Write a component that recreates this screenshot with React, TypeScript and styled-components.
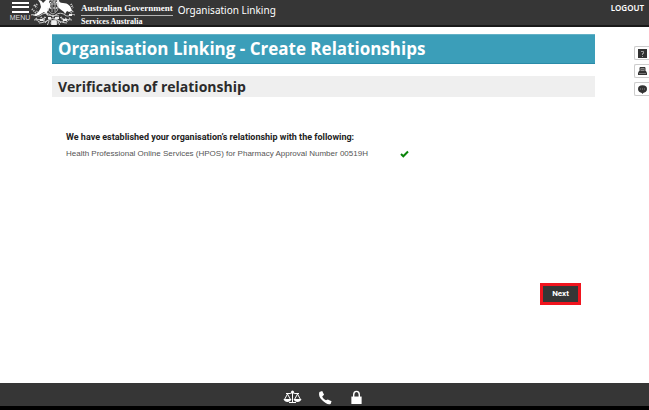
import React from 'react';
import styled, { createGlobalStyle } from 'styled-components';

const GlobalStyle = createGlobalStyle`
  * { box-sizing: border-box; }
  body { margin: 0; background: #fff; font-family: "Liberation Sans", Arial, sans-serif; }
  h1, h2, p { margin: 0; }
  button { border: 0; padding: 0; font-family: inherit; cursor: pointer; }
  a { color: inherit; text-decoration: none; }
  svg { display: block; flex: none; }
`;

const Page = styled.div`
  min-height: 100vh;
  display: flex;
  flex-direction: column;
`;

const TopBar = styled.header`
  height: 27px;
  display: flex;
  align-items: flex-start;
  background: #363636;
  border-bottom: 2px solid #191919;
  color: #fff;
  overflow: hidden;
`;

const MenuButton = styled.button`
  width: 20px;
  margin-left: 10px;
  padding-top: 1px;
  display: flex;
  flex-direction: column;
  align-items: center;
  gap: 1px;
  background: none;
  color: #ddd;
  font-size: 7px;
  line-height: 8px;
`;

const Brand = styled.a`
  display: flex;
  align-items: flex-start;
`;

const BrandText = styled.span`
  margin-left: 5px;
  display: flex;
  flex-direction: column;
  font-family: "Liberation Serif", "Times New Roman", serif;
  font-weight: 700;
  white-space: nowrap;
`;

const Government = styled.span`
  padding-top: 2px;
  border-bottom: 1px solid #b5b5b5;
  font-size: 9px;
  line-height: 13px;
`;

const Agency = styled.span`
  font-size: 8px;
  line-height: 11px;
`;

const AppName = styled.span`
  margin-left: 5px;
  padding-top: 2px;
  flex: 1;
  font-family: "Noto Sans", "Open Sans", sans-serif;
  font-size: 10px;
  line-height: 16px;
  white-space: nowrap;
`;

const Logout = styled.button`
  margin-right: 5px;
  padding-top: 3px;
  background: none;
  color: #fff;
  font-family: "Noto Sans", "Open Sans", sans-serif;
  font-size: 8px;
  font-weight: 600;
  line-height: 10px;
`;

const Body = styled.div`
  flex: 1;
  display: grid;
  grid-template-columns: 52px minmax(0, 1fr) 54px;
`;

const Main = styled.main`
  grid-column: 2;
  padding-top: 7px;
`;

const Title = styled.h1`
  padding: 0 6px;
  background: #3b9eb9;
  border-top: 1px solid #63b1c6;
  border-bottom: 1px solid #2a8ba8;
  color: #fff;
  font-family: "Open Sans", sans-serif;
  font-size: 17px;
  font-weight: 700;
  line-height: 28px;
`;

const Subtitle = styled.h2`
  margin-top: 12px;
  padding: 0 6px;
  background: #efefef;
  color: #2b2b2b;
  font-family: "Open Sans", sans-serif;
  font-size: 14px;
  font-weight: 700;
  line-height: 21px;
`;

const Result = styled.section`
  margin-top: 34px;
  padding-left: 14px;
  line-height: 12px;
`;

const Lead = styled.p`
  color: #222;
  font-family: Roboto, Arial, sans-serif;
  font-size: 9px;
  font-weight: 700;
`;

const Service = styled.p`
  margin-top: 5px;
  display: flex;
  align-items: center;
  gap: 32px;
  color: #555;
  font-size: 8px;
`;

const Actions = styled.div`
  margin-top: 123px;
  padding-right: 14px;
  display: flex;
  justify-content: flex-end;
`;

const NextButton = styled.button`
  width: 41px;
  height: 22px;
  border: 3px solid #f0141e;
  background: #363636;
  color: #fff;
  font-family: Roboto, Arial, sans-serif;
  font-size: 8px;
  font-weight: 700;
  line-height: 10px;
`;

const Tools = styled.aside`
  padding-top: 19px;
  display: flex;
  flex-direction: column;
  align-items: flex-end;
  gap: 4px;
`;

const Tool = styled.button`
  width: 15px;
  height: 14px;
  display: flex;
  align-items: center;
  justify-content: center;
  background: #fff;
  border: 1px solid #ccc;
  border-right: 0;
  border-radius: 2px 0 0 2px;
`;

const Footer = styled.footer`
  height: 27px;
  padding: 7px 0 0 282px;
  display: flex;
  gap: 11px;
  align-items: flex-start;
  background: #363636;
  border-bottom: 4px solid #000;
  color: #fff;
`;

const FooterLink = styled.a`
  width: 21px;
  display: flex;
  justify-content: center;
`;

function Crest() {
  return (
    <svg width="46" height="27" viewBox="0 0 46 27" fill="none" stroke="#ccc" strokeWidth="1" aria-hidden="true">
      <path d="M8 0c3 0 4 1 5 3l3-3h4l-1 2c2 2 2 5 0 7l-2 3 1 3h-1l-3-3-5 3-7 1c5-2 7-4 9-9l-1-4z" fill="#fff" stroke="none" />
      <path d="M29 0c0 2 1 3 4 3 5 0 8 3 9 8l-3 1-2-1-2 3-1-2-4-3c-3-2-4-5-3-9z" fill="#fff" stroke="none" />
      <path d="M19 0h9v8c0 3-3 5-5 6-3-1-5-3-5-6M20 4h8M22 0v12M25 0v12" strokeWidth="0.8" />
      <path d="M20 2l1 1M24 1v2M27 2l-1 1M20 7l1 2M24 7v2M27 7l-1 2" stroke="#eee" />
      <path d="M1 15c4-2 6 3 10 0s8-2 12 2c4-4 8-5 12-2s6-2 10 0M4 20c5-1 8 1 12-3M42 20c-5-1-8 1-12-3M9 23c4 0 8-2 14-5 6 3 10 5 14 5" />
      <path d="M4 5l3 3M2 9l3 3M5 13l3-2M7 4l-2 3M41 4l2 4M43 11l-3 3M6 18l3 4M11 17l3 4M15 17l-2 4M36 18l-3 4M31 17l3 4M40 18l-4 4" strokeDasharray="1 1" strokeWidth="2" />
      <path d="M17 15l12 1M15 23c3-4 5-4 8-2 3-2 5-2 8 2M19 21l-2 5M28 21l2 5" />
      <circle cx="24" cy="23" r="3" fill="#eee" />
      <path d="M10 20h3M33 20h4M18 18h3M25 18h4M5 15h2M39 15h3" stroke="#eee" strokeWidth="2" />
    </svg>
  );
}

function MenuIcon() {
  return (
    <svg width="17" height="12" viewBox="0 0 17 12" fill="#fff" aria-hidden="true">
      <path d="M0 1h17v2H0zM0 5h17v2H0zM0 10h17v2H0z" />
    </svg>
  );
}

export default function App() {
  return (
    <>
      <GlobalStyle />
      <Page>
        <TopBar>
          <MenuButton type="button"><MenuIcon />MENU</MenuButton>
          <Brand href="#home">
            <Crest />
            <BrandText>
              <Government>Australian Government</Government>
              <Agency>Services Australia</Agency>
            </BrandText>
          </Brand>
          <AppName>Organisation Linking</AppName>
          <Logout type="button">LOGOUT</Logout>
        </TopBar>
        <Body>
          <Main>
            <Title>Organisation Linking - Create Relationships</Title>
            <Subtitle>Verification of relationship</Subtitle>
            <Result>
              <Lead>We have established your organisation’s relationship with the following:</Lead>
              <Service>
                Health Professional Online Services (HPOS) for Pharmacy Approval Number 00519H
                <svg width="9" height="8" viewBox="0 0 9 8" role="img" aria-label="Established">
                  <path d="M1 4l2.3 2.3L8 1.5" fill="none" stroke="#0a840a" strokeWidth="2" />
                </svg>
              </Service>
            </Result>
            <Actions><NextButton type="button">Next</NextButton></Actions>
          </Main>
          <Tools>
            <Tool type="button" aria-label="Help">
              <svg width="9" height="9" viewBox="0 0 9 9">
                <path d="M0 0h9v9H0z" fill="#333" />
                <path d="M3 2.5h2.5v2h-1V6M4.5 7v1" fill="none" stroke="#bbb" strokeWidth="0.8" />
              </svg>
            </Tool>
            <Tool type="button" aria-label="Print">
              <svg width="9" height="8" viewBox="0 0 9 8">
                <path d="M2 0.500h5v4H2z" fill="#888" stroke="#333" />
                <path d="M3 2.500h3" stroke="#555" />
                <path d="M1 4h7l1 2v2H0V6z" fill="#333" />
                <path d="M1 6.500h7" stroke="#777" />
              </svg>
            </Tool>
            <Tool type="button" aria-label="Chat">
              <svg width="9" height="9" viewBox="0 0 9 9">
                <ellipse cx="4.500" cy="4" rx="4.500" ry="3.700" fill="#333" />
                <path d="M3 7h3L4.500 9z" fill="#333" />
                <path d="M2 4h1M4 4h1M6 4h1" stroke="#888" />
              </svg>
            </Tool>
          </Tools>
        </Body>
        <Footer>
          <FooterLink href="#legal" aria-label="Legal">
            <svg width="19" height="14" viewBox="0 0 19 14" fill="none" stroke="#fff">
              <path d="M9.500 2v11M6 12.500h7M3 3.500h4l2.500-1 2.500 1h4M4.500 4L1.500 9.500h6zM14.500 4l-3 5.500h6z" />
              <path d="M0.500 9h8c-1 4-7 4-8 0zM10.500 9h8c-1 4-7 4-8 0z" fill="#fff" stroke="none" />
              <circle cx="9.500" cy="2" r="1.500" fill="#fff" stroke="none" />
            </svg>
          </FooterLink>
          <FooterLink href="#contact" aria-label="Contact">
            <svg width="14" height="15" viewBox="0 0 14 16" fill="#fff">
              <path d="M1 2l3-1 2 4-2 2c1 2 2 3 4 4l2-1 4 2-1 3c-3 1-6-1-9-4S0 5 1 2z" />
            </svg>
          </FooterLink>
          <FooterLink href="#privacy" aria-label="Privacy">
            <svg width="11" height="14" viewBox="0 0 11 15">
              <path d="M2.500 8V5a3 3.500 0 016 0v3" fill="none" stroke="#fff" strokeWidth="1.500" />
              <rect y="7" width="11" height="8" fill="#fff" />
            </svg>
          </FooterLink>
        </Footer>
      </Page>
    </>
  );
}
